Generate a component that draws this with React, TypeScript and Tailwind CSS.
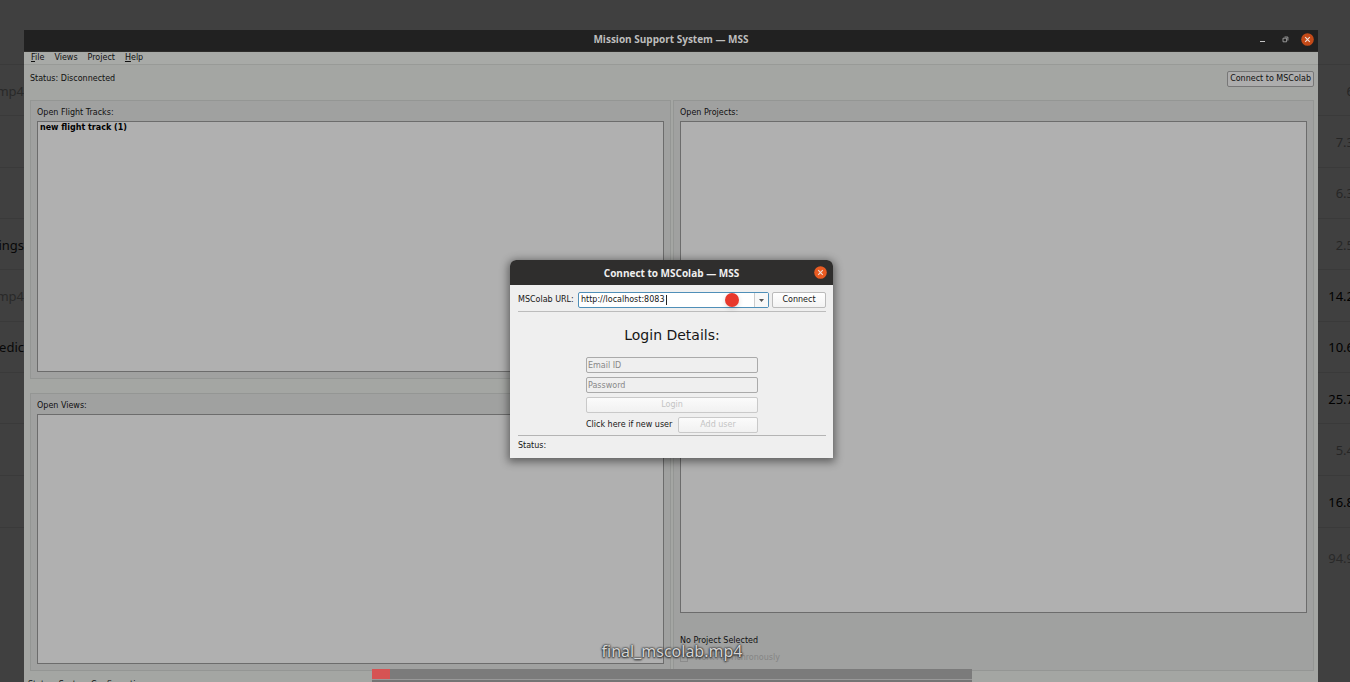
import type { ReactNode } from "react";

type FileRow = { name: string; size: string; muted: boolean; mutedName?: boolean };

const fileRows: FileRow[] = [
  { name: "mp4", size: "6", muted: true },
  { name: "", size: "7.3", muted: true },
  { name: "", size: "6.3", muted: true },
  { name: "ings", size: "2.5", muted: true, mutedName: false },
  { name: "mp4", size: "14.2", muted: false, mutedName: true },
  { name: "edic", size: "10.6", muted: false },
  { name: "", size: "25.7", muted: false },
  { name: "", size: "5.4", muted: true },
  { name: "", size: "16.8", muted: false },
];

function FileList() {
  return (
    <div className="flex h-full flex-col pt-16 font-['Noto_Sans','Open_Sans',sans-serif] text-[13px] leading-5">
      <ul className="grid h-[464px] grid-rows-9 border-y border-[#3a3a3a]">
        {fileRows.map((row, i) => (
          <li
            key={i}
            className="flex items-center justify-between border-b border-[#3a3a3a] pt-px last:border-b-0"
          >
            <span
              className={`flex w-6 justify-end overflow-hidden ${
                (row.mutedName ?? row.muted) ? "text-[#292929]" : "text-[#080808]"
              }`}
            >
              {row.name}
            </span>
            <span className={`-mr-1 ${row.muted ? "text-[#262626]" : "text-black"}`}>{row.size}</span>
          </li>
        ))}
      </ul>
      <p className="-mr-1 pt-5 text-right text-[#292929]">94.9</p>
    </div>
  );
}

function CloseIcon() {
  return (
    <svg viewBox="0 0 13 13" className="size-[13px]" aria-hidden="true">
      <circle cx="6.5" cy="6.5" r="6.3" fill="currentColor" />
      <path d="M4.2 4.2l4.6 4.6M8.8 4.2L4.2 8.8" stroke="#eee3dc" strokeWidth="1.1" />
    </svg>
  );
}

function GroupBox({ children, className = "" }: { children: ReactNode; className?: string }) {
  return (
    <section className={`flex flex-col border border-[#949694] bg-[#a0a1a0] px-1.5 pt-1 pb-1.5 ${className}`}>
      {children}
    </section>
  );
}

function ListPanel({ title, items = [] }: { title: string; items?: string[] }) {
  return (
    <>
      <h2 className="h-4 pt-px leading-[14px]">{title}</h2>
      <ul aria-label={title} className="flex-1 border border-[#6c6c6c] bg-[#b0b0b0] px-0.5 font-bold text-black">
        {items.map((item) => (
          <li key={item}>{item}</li>
        ))}
      </ul>
    </>
  );
}

function MainWindow() {
  return (
    <div className="absolute top-[30px] right-8 -bottom-2 left-6 flex flex-col bg-[#a4a6a3] text-[#101010]">
      <header className="grid h-[22px] shrink-0 grid-cols-[1fr_auto_1fr] items-center border-b border-[#2e2d2b] bg-[#212121] px-1 pb-[3px]">
        <span />
        <h1 className="font-['Open_Sans','Noto_Sans',sans-serif] text-[10px] leading-3 font-bold text-[#bdbdbd]">
          Mission Support System — MSS
        </h1>
        <div className="flex items-center justify-end gap-4">
          <button type="button" aria-label="Minimize" className="text-[#c4c4c4]">
            <svg viewBox="0 0 7 7" className="size-[7px]" aria-hidden="true">
              <path d="M1 5.5h5" stroke="currentColor" />
            </svg>
          </button>
          <button type="button" aria-label="Restore" className="text-[#a2a2a2]">
            <svg viewBox="0 0 7 7" className="size-[7px]" fill="none" aria-hidden="true">
              <path d="M1 2.2h3.6v3.6H1zM2.5 1h3.4v3.6" stroke="currentColor" strokeWidth="0.9" />
            </svg>
          </button>
          <button type="button" aria-label="Close" className="-ml-1 text-[#c44a18]">
            <CloseIcon />
          </button>
        </div>
      </header>

      <nav className="flex h-[13px] shrink-0 items-end gap-2.5 border-b border-[#989a97] bg-[#a8aaa7] px-[7px]">
        <button type="button"><span className="underline">F</span>ile</button>
        <button type="button">Views</button>
        <button type="button">Project</button>
        <button type="button"><span className="underline">H</span>elp</button>
      </nav>

      <div className="flex h-[27px] shrink-0 items-center justify-between pr-1 pl-1.5">
        <p>Status: Disconnected</p>
        <button type="button" className="h-4 rounded-xs border border-[#777] bg-[#adadad] px-0.5 leading-[14px]">
          Connect to MSColab
        </button>
      </div>

      <main className="mt-2 grid min-h-0 flex-1 grid-cols-2 gap-0.5 pr-1 pl-1.5">
        <div className="flex flex-col gap-3.5">
          <GroupBox className="flex-1">
            <ListPanel title="Open Flight Tracks:" items={["new flight track (1)"]} />
          </GroupBox>
          <GroupBox className="flex-1">
            <ListPanel title="Open Views:" />
          </GroupBox>
        </div>
        <GroupBox>
          <ListPanel title="Open Projects:" />
          <p className="mt-[22px]">No Project Selected</p>
          <label className="mt-[5px] flex items-center gap-1.5 text-[#858585]">
            <input
              type="checkbox"
              disabled
              className="size-2 appearance-none border border-[#8b8b8b]"
            />
            Work Asynchronously
          </label>
        </GroupBox>
      </main>

      <footer className="h-[19px] shrink-0 px-1 pt-2">Status: System Configuration</footer>
    </div>
  );
}

const fieldClass =
  "h-4 w-full rounded-xs border border-[#aaa] bg-[#efefef] px-px text-[#222] placeholder:text-[#888] placeholder:opacity-100";
const disabledButtonClass =
  "h-4 rounded-xs border border-[#c9c9c9] bg-linear-to-b from-[#fbfbfb] to-[#f1f1f1] text-[#c4c4c4]";

function ConnectDialog() {
  return (
    <div
      role="dialog"
      aria-labelledby="dialog-title"
      className="absolute top-[260px] left-[calc(50%-165px)] flex w-[323px] flex-col overflow-hidden rounded-t-md bg-[#efefef] text-[#161616] shadow-[0_2px_8px_2px_rgba(0,0,0,0.45)]"
    >
      <header className="grid h-[25px] grid-cols-[1fr_auto_1fr] items-center bg-[#2f2e2d] px-1.5">
        <span />
        <h2
          id="dialog-title"
          className="font-['Open_Sans','Noto_Sans',sans-serif] text-[10px] leading-3 font-bold text-[#efefef]"
        >
          Connect to MSColab — MSS
        </h2>
        <button type="button" aria-label="Close dialog" className="justify-self-end text-[#e95b22]">
          <CloseIcon />
        </button>
      </header>

      <form className="flex flex-col pt-[7px] pr-[7px] pl-2" onSubmit={(e) => e.preventDefault()}>
        <div className="flex items-center border-b border-[#bcbcbc] pb-[3px]">
          <label htmlFor="url" className="w-15">MSColab URL:</label>
          <div className="relative flex h-4 flex-1 rounded-xs border border-[#4f8fb8] bg-white">
            <input
              id="url"
              type="text"
              defaultValue="http://localhost:8083"
              className="min-w-0 flex-1 bg-transparent px-0.5 outline-none"
            />
            <span className="absolute top-0.5 left-[87px] h-2.5 w-px bg-[#222]" />
            <span className="absolute left-[146px] size-3.5 rounded-full bg-[#e8382c] shadow-[0_2px_5px_rgba(0,0,0,0.15)]" />
            <button
              type="button"
              aria-label="Show recent URLs"
              className="flex w-3.5 items-center justify-center border-l border-[#ccc] bg-[#f8f8f8]"
            >
              <svg viewBox="0 0 5 3" className="h-[3px] w-[5px]" aria-hidden="true">
                <path d="M0 0h5L2.5 3z" fill="#555" />
              </svg>
            </button>
          </div>
          <button
            type="submit"
            className="ml-[3px] h-4 w-[54px] rounded-xs border border-[#bbb] bg-linear-to-b from-white to-[#f3f3f3]"
          >
            Connect
          </button>
        </div>

        <h3 className="pt-[13px] text-center text-sm leading-5">Login Details:</h3>

        <div className="mx-auto mt-3 mb-0.5 flex w-[172px] flex-col gap-1">
          <input type="email" disabled aria-label="Email ID" placeholder="Email ID" className={fieldClass} />
          <input type="password" disabled aria-label="Password" placeholder="Password" className={fieldClass} />
          <button type="button" disabled className={disabledButtonClass}>Login</button>
          <div className="flex items-center justify-between">
            <span className="whitespace-nowrap">Click here if new user</span>
            <button type="button" disabled className={`w-20 ${disabledButtonClass}`}>Add user</button>
          </div>
        </div>

        <p className="border-t border-[#b4b4b4] pt-1 pb-1.5">Status:</p>
      </form>
    </div>
  );
}

function PlayerOverlay() {
  return (
    <div className="absolute bottom-0 left-[calc(50%-303px)] flex w-[600px] flex-col items-center">
      <p className="pb-1.5 font-['Noto_Sans','Open_Sans',sans-serif] text-base leading-6 text-[#d4d4d4] [text-shadow:0_0_2px_#222,0_0_2px_#333,0_1px_2px_#333]">
        final_mscolab.mp4
      </p>
      <div role="progressbar" aria-label="Playback" aria-valuenow={3} className="h-2.5 w-full bg-[#7b7b7b]">
        <div className="h-full w-[3%] bg-[#d65353]" />
      </div>
      <div className="h-[3px] w-full border-t border-[#999] bg-[#747474]" />
    </div>
  );
}

export default function App() {
  return (
    <div className="relative h-screen overflow-hidden bg-[#404040] font-['DejaVu_Sans',sans-serif] text-[8px] leading-3">
      <FileList />
      <MainWindow />
      <ConnectDialog />
      <PlayerOverlay />
    </div>
  );
}
